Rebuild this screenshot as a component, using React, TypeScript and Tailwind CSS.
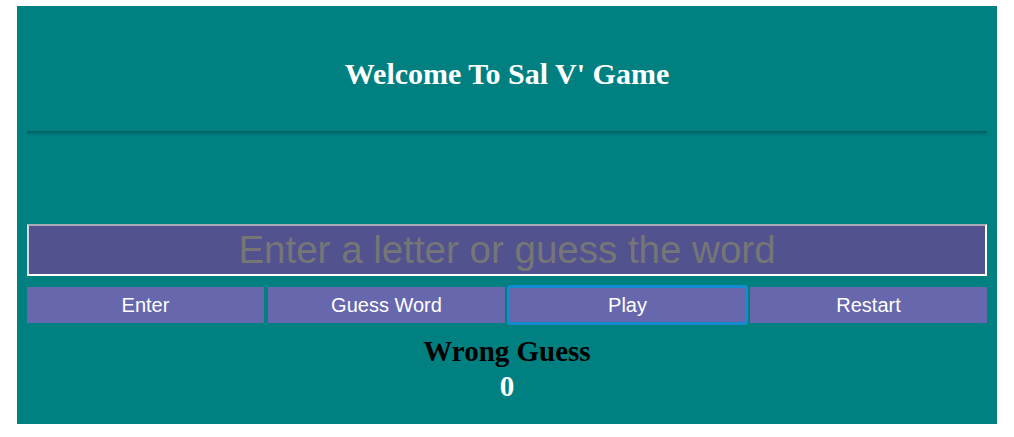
export default function App() {
  return (
    <div className="bg-white w-[1014px] h-[437px] pt-[6px] px-[17px]">
      <div className="bg-[#008080] h-[418px] px-[10px] pt-[10px] flex flex-col">
        <header className="h-[115px] flex items-center justify-center">
          <h1 className="font-['Liberation_Serif',serif] font-bold text-[30px] text-white leading-none">
            Welcome To Sal V' Game
          </h1>
        </header>
        <div className="h-[5px] bg-gradient-to-b from-black/25 to-transparent" />

        <div className="mt-[88px]">
          <input
            type="text"
            placeholder="Enter a letter or guess the word"
            className="w-full h-[52px] bg-[#52528f] border-2 border-t-[#a9a9b8] border-l-[#d8d8e0] border-b-white border-r-white text-center text-[38.5px] font-['Liberation_Sans',Arial,sans-serif] text-white placeholder:text-[#767676] outline-none"
          />
        </div>

        <div className="mt-[11px] flex gap-[4px] font-['Liberation_Sans',Arial,sans-serif] text-[20px] text-white">
          <button className="flex-1 h-[36px] bg-[#6767ae]">Enter</button>
          <button className="flex-1 h-[36px] bg-[#6767ae]">Guess Word</button>
          <button className="flex-1 h-[36px] bg-[#6767ae] outline-[3px] outline-[#168bd0] -outline-offset-1 rounded-[2px]">Play</button>
          <button className="flex-1 h-[36px] bg-[#6767ae]">Restart</button>
        </div>

        <div className="mt-[11px] flex flex-col items-center font-['Liberation_Serif',serif] font-bold">
          <h2 className="text-[29px] leading-[34px] text-black">Wrong Guess</h2>
          <h2 className="text-[29px] leading-[36px] text-white">0</h2>
        </div>
      </div>
    </div>
  );
}
